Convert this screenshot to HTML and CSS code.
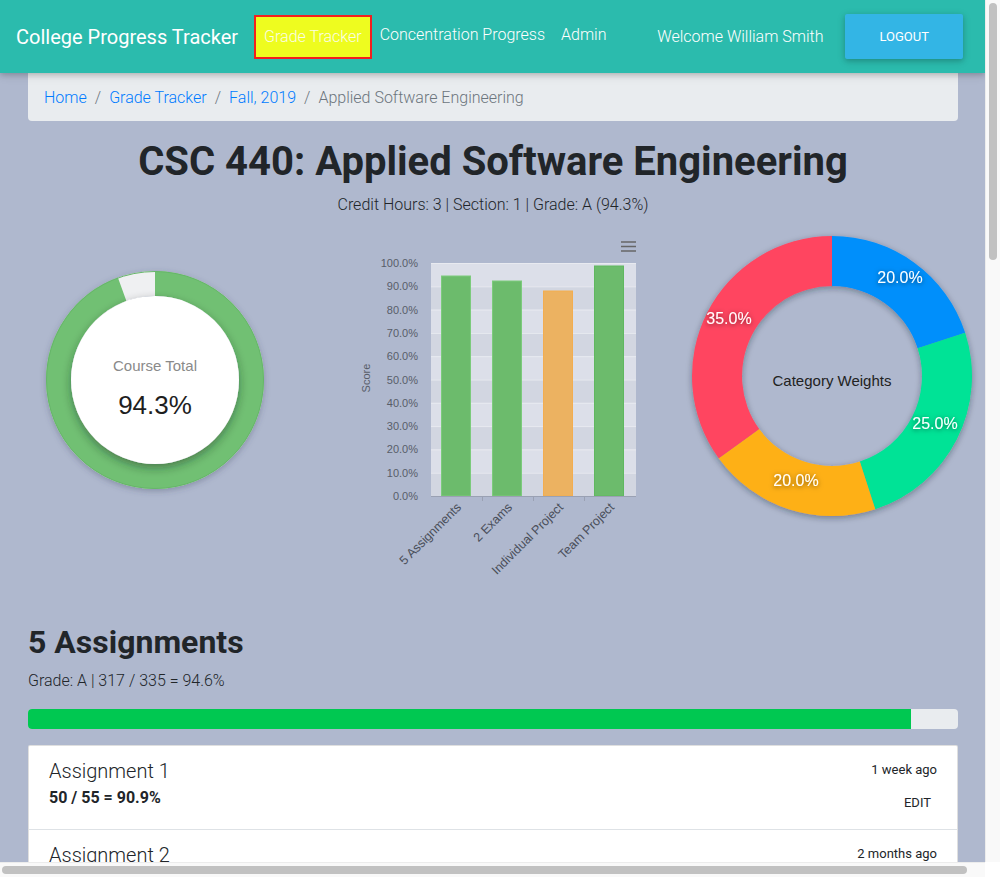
FILE: index.html
```html
<!DOCTYPE html>
<html lang="en">
<head>
<meta charset="utf-8">
<title>CSC 440: Applied Software Engineering</title>
<link rel="stylesheet" href="styles.css">
</head>
<body>
<nav class="navbar">
  <a class="brand" href="#">College Progress Tracker</a>
  <ul class="nav-links">
    <li class="nav-item active"><a href="#">Grade Tracker</a></li>
    <li class="nav-item"><a href="#">Concentration Progress</a></li>
    <li class="nav-item"><a href="#">Admin</a></li>
  </ul>
  <span class="welcome">Welcome William Smith</span>
  <button class="btn-logout">Logout</button>
</nav>

<main class="container">
  <ol class="breadcrumb">
    <li><a href="#">Home</a></li>
    <li><a href="#">Grade Tracker</a></li>
    <li><a href="#">Fall, 2019</a></li>
    <li class="current">Applied Software Engineering</li>
  </ol>

  <h1 class="course-title">CSC 440: Applied Software Engineering</h1>
  <p class="course-meta">Credit Hours: 3 | Section: 1 | Grade: A (94.3%)</p>

  <div class="charts">
    <div class="chart chart-total">
      <svg width="310" height="370" viewBox="0 0 310 370">
        <defs>
          <filter id="ringShadow" x="-30%" y="-30%" width="160%" height="160%">
            <feDropShadow dx="0" dy="2" stdDeviation="3" flood-color="#3a4560" flood-opacity="0.35"/>
          </filter>
          <filter id="innerShadow" x="-30%" y="-30%" width="160%" height="160%">
            <feDropShadow dx="0" dy="4" stdDeviation="5" flood-color="#1d2a22" flood-opacity="0.45"/>
          </filter>
        </defs>
        <g filter="url(#ringShadow)">
          <circle cx="127" cy="155" r="96.5" fill="none" stroke="#eff0f2" stroke-width="25"/>
          <circle cx="127" cy="155" r="96.5" fill="none" stroke="#71c073" stroke-width="25" stroke-dasharray="571.8 700" transform="rotate(-90 127 155)"/>
        </g>
        <circle cx="127" cy="155" r="108.5" fill="none" stroke="#66b669" stroke-width="1"/>
        <circle cx="127" cy="155" r="84" fill="#ffffff" filter="url(#innerShadow)"/>
        <text class="donut-label" x="127" y="146" text-anchor="middle">Course Total</text>
        <text class="donut-value" x="127" y="189" text-anchor="middle">94.3%</text>
      </svg>
    </div>

    <div class="chart chart-bars">
      <svg width="310" height="370" viewBox="0 0 310 370">
        <g class="menu-icon" stroke="#666" stroke-width="1.5">
          <line x1="283" y1="17" x2="298" y2="17"/>
          <line x1="283" y1="21.5" x2="298" y2="21.5"/>
          <line x1="283" y1="26" x2="298" y2="26"/>
        </g>
        <rect x="93" y="38" width="205" height="233" fill="#d2d6e1"/>
        <rect x="93" y="38" width="205" height="23.3" fill="#dcdfe9"/>
        <rect x="93" y="84.6" width="205" height="23.3" fill="#dcdfe9"/>
        <rect x="93" y="131.2" width="205" height="23.3" fill="#dcdfe9"/>
        <rect x="93" y="177.8" width="205" height="23.3" fill="#dcdfe9"/>
        <rect x="93" y="224.4" width="205" height="23.3" fill="#dcdfe9"/>
        <g stroke="#e8eaf0" stroke-width="1">
          <line x1="93" y1="38.5" x2="298" y2="38.5"/>
          <line x1="93" y1="61.8" x2="298" y2="61.8"/>
          <line x1="93" y1="85.1" x2="298" y2="85.1"/>
          <line x1="93" y1="108.4" x2="298" y2="108.4"/>
          <line x1="93" y1="131.7" x2="298" y2="131.7"/>
          <line x1="93" y1="155" x2="298" y2="155"/>
          <line x1="93" y1="178.3" x2="298" y2="178.3"/>
          <line x1="93" y1="201.6" x2="298" y2="201.6"/>
          <line x1="93" y1="224.9" x2="298" y2="224.9"/>
          <line x1="93" y1="248.2" x2="298" y2="248.2"/>
        </g>
        <g class="axis-labels" text-anchor="end">
          <text x="80" y="42">100.0%</text>
          <text x="80" y="65.3">90.0%</text>
          <text x="80" y="88.6">80.0%</text>
          <text x="80" y="111.9">70.0%</text>
          <text x="80" y="135.2">60.0%</text>
          <text x="80" y="158.5">50.0%</text>
          <text x="80" y="181.8">40.0%</text>
          <text x="80" y="205.1">30.0%</text>
          <text x="80" y="228.4">20.0%</text>
          <text x="80" y="251.7">10.0%</text>
          <text x="80" y="275">0.0%</text>
        </g>
        <text class="axis-title" transform="translate(32 153) rotate(-90)" text-anchor="middle">Score</text>
        <rect x="103.5" y="51" width="29" height="220" fill="#6cbb6c" stroke="#7ccb7c" stroke-width="1"/>
        <rect x="154.5" y="56" width="29" height="215" fill="#6cbb6c" stroke="#7ccb7c" stroke-width="1"/>
        <rect x="205.5" y="66" width="29" height="205" fill="#ecb261" stroke="#f3ad4f" stroke-width="1"/>
        <rect x="256.5" y="41" width="29" height="230" fill="#6cbb6c" stroke="#5fb85f" stroke-width="1"/>
        <line x1="93" y1="271.5" x2="298" y2="271.5" stroke="#9aa1b3" stroke-width="1"/>
        <g stroke="#9aa1b3" stroke-width="1">
          <line x1="144.5" y1="271" x2="144.5" y2="276"/>
          <line x1="195.5" y1="271" x2="195.5" y2="276"/>
          <line x1="246.5" y1="271" x2="246.5" y2="276"/>
        </g>
        <g class="cat-labels" text-anchor="end">
          <text transform="translate(124 283) rotate(-45)">5 Assignments</text>
          <text transform="translate(175 283) rotate(-45)">2 Exams</text>
          <text transform="translate(226 283) rotate(-45)">Individual Project</text>
          <text transform="translate(277 283) rotate(-45)">Team Project</text>
        </g>
      </svg>
    </div>

    <div class="chart chart-weights">
      <svg width="355" height="370" viewBox="0 0 355 370">
        <defs>
          <filter id="pieShadow" x="-20%" y="-20%" width="140%" height="140%">
            <feDropShadow dx="0" dy="2" stdDeviation="3" flood-color="#1c2233" flood-opacity="0.4"/>
          </filter>
          <filter id="labelShadow" x="-30%" y="-60%" width="160%" height="220%">
            <feDropShadow dx="0" dy="1" stdDeviation="2.5" flood-color="#000" flood-opacity="0.55"/>
          </filter>
        </defs>
        <g filter="url(#pieShadow)">
          <path fill="#008ffb" d="M184 11 A140 140 0 0 1 317.15 107.74 L269.6 123.19 A90 90 0 0 0 184 61 Z"/>
          <path fill="#00e396" d="M317.15 107.74 A140 140 0 0 1 227.26 284.15 L211.81 236.6 A90 90 0 0 0 269.6 123.19 Z"/>
          <path fill="#feb019" d="M227.26 284.15 A140 140 0 0 1 70.74 233.29 L111.19 203.9 A90 90 0 0 0 211.81 236.6 Z"/>
          <path fill="#ff4560" d="M70.74 233.29 A140 140 0 0 1 184 11 L184 61 A90 90 0 0 0 111.19 203.9 Z"/>
        </g>
        <g class="pie-labels" text-anchor="middle" filter="url(#labelShadow)">
          <text x="252" y="58">20.0%</text>
          <text x="287" y="204">25.0%</text>
          <text x="148" y="261">20.0%</text>
          <text x="81" y="99">35.0%</text>
        </g>
        <text class="pie-center" x="184" y="161" text-anchor="middle">Category Weights</text>
      </svg>
    </div>
  </div>

  <section class="category">
    <h2 class="category-title">5 Assignments</h2>
    <p class="grade-line">Grade: A | 317 / 335 = 94.6%</p>
    <div class="progress"><div class="progress-bar" style="width: 94.9%"></div></div>
    <ul class="item-list">
      <li class="item">
        <div class="item-main"><h3 class="item-name">Assignment 1</h3><strong class="item-score">50 / 55 = 90.9%</strong></div>
        <div class="item-side"><small class="item-date">1 week ago</small><button class="btn-edit">Edit</button></div>
      </li>
      <li class="item">
        <div class="item-main"><h3 class="item-name">Assignment 2</h3><strong class="item-score">68 / 70 = 97.1%</strong></div>
        <div class="item-side"><small class="item-date">2 months ago</small><button class="btn-edit">Edit</button></div>
      </li>
      <li class="item">
        <div class="item-main"><h3 class="item-name">Assignment 3</h3><strong class="item-score">65 / 70 = 92.9%</strong></div>
        <div class="item-side"><small class="item-date">2 months ago</small><button class="btn-edit">Edit</button></div>
      </li>
      <li class="item">
        <div class="item-main"><h3 class="item-name">Assignment 4</h3><strong class="item-score">67 / 70 = 95.7%</strong></div>
        <div class="item-side"><small class="item-date">3 months ago</small><button class="btn-edit">Edit</button></div>
      </li>
      <li class="item">
        <div class="item-main"><h3 class="item-name">Assignment 5</h3><strong class="item-score">67 / 70 = 95.7%</strong></div>
        <div class="item-side"><small class="item-date">3 months ago</small><button class="btn-edit">Edit</button></div>
      </li>
    </ul>
  </section>

  <section class="category">
    <h2 class="category-title">2 Exams</h2>
    <p class="grade-line">Grade: A- | 185 / 200 = 92.5%</p>
    <div class="progress"><div class="progress-bar" style="width: 92.5%"></div></div>
    <ul class="item-list">
      <li class="item">
        <div class="item-main"><h3 class="item-name">Midterm Exam</h3><strong class="item-score">90 / 100 = 90.0%</strong></div>
        <div class="item-side"><small class="item-date">1 month ago</small><button class="btn-edit">Edit</button></div>
      </li>
      <li class="item">
        <div class="item-main"><h3 class="item-name">Final Exam</h3><strong class="item-score">95 / 100 = 95.0%</strong></div>
        <div class="item-side"><small class="item-date">1 week ago</small><button class="btn-edit">Edit</button></div>
      </li>
    </ul>
  </section>

  <section class="category">
    <h2 class="category-title">Individual Project</h2>
    <p class="grade-line">Grade: B+ | 88 / 100 = 88.0%</p>
    <div class="progress"><div class="progress-bar warn" style="width: 88%"></div></div>
    <ul class="item-list">
      <li class="item">
        <div class="item-main"><h3 class="item-name">Individual Project</h3><strong class="item-score">88 / 100 = 88.0%</strong></div>
        <div class="item-side"><small class="item-date">1 month ago</small><button class="btn-edit">Edit</button></div>
      </li>
    </ul>
  </section>

  <section class="category">
    <h2 class="category-title">Team Project</h2>
    <p class="grade-line">Grade: A | 99 / 100 = 99.0%</p>
    <div class="progress"><div class="progress-bar" style="width: 99%"></div></div>
    <ul class="item-list">
      <li class="item">
        <div class="item-main"><h3 class="item-name">Team Project</h3><strong class="item-score">99 / 100 = 99.0%</strong></div>
        <div class="item-side"><small class="item-date">1 week ago</small><button class="btn-edit">Edit</button></div>
      </li>
    </ul>
  </section>
</main>
<footer class="page-footer">College Progress Tracker</footer>

<div class="scrollbar scrollbar-v" aria-hidden="true"><div class="scroll-thumb"></div></div>
<div class="scrollbar scrollbar-h" aria-hidden="true"><div class="scroll-thumb"></div></div>
<div class="scroll-corner" aria-hidden="true"></div>
</body>
</html>
```

FILE: styles.css
```css
html, body {
  margin: 0;
  padding: 0;
}

html {
  overflow: hidden;
}

body {
  margin-right: 15px;
  background: #afb8ce;
  font-family: Roboto, "Noto Sans", sans-serif;
  font-weight: 300;
  font-size: 16px;
  line-height: 1.5;
  color: #212529;
}

a {
  text-decoration: none;
}

/* Window scrollbars (overlay) */
.scrollbar {
  position: fixed;
  z-index: 10;
  background: #f9f9f9;
  box-sizing: border-box;
}

.scrollbar-v {
  top: 0;
  right: 0;
  width: 15px;
  height: 862px;
  border-left: 1px solid #ececec;
}

.scrollbar-h {
  left: 0;
  bottom: 0;
  width: 985px;
  height: 15px;
  border-top: 1px solid #ececec;
}

.scroll-thumb {
  position: absolute;
  background: #c1c1c1;
  border-radius: 4px;
}

.scrollbar-v .scroll-thumb {
  top: 3px;
  left: 3px;
  width: 8px;
  height: 257px;
}

.scrollbar-h .scroll-thumb {
  left: 2px;
  top: 3px;
  width: 965px;
  height: 8px;
}

.scroll-corner {
  position: fixed;
  z-index: 10;
  right: 0;
  bottom: 0;
  width: 15px;
  height: 15px;
  background: #ffffff;
}

/* Navbar */
.navbar {
  position: relative;
  z-index: 2;
  display: flex;
  align-items: center;
  height: 73px;
  padding: 0 22px 0 16px;
  background: #2bbbad;
  box-shadow: 0 2px 5px 0 rgba(0, 0, 0, 0.16), 0 2px 10px 0 rgba(0, 0, 0, 0.12);
  box-sizing: border-box;
}

.brand {
  color: #fff;
  font-size: 20px;
  font-weight: 400;
  margin-right: 16px;
  white-space: nowrap;
}

.nav-links {
  display: flex;
  align-items: center;
  list-style: none;
  margin: 0;
  padding: 0;
}

.nav-item a {
  display: block;
  padding: 8px;
  color: #fff;
  white-space: nowrap;
  margin-top: -4px;
}

.nav-item.active a {
  background: #eefc1f;
  border: 2px solid #f21f1f;
  padding: 8px;
  margin: 0;
  color: #fbfde4;
}

.welcome {
  margin-left: auto;
  margin-right: 22px;
  color: #fff;
  white-space: nowrap;
}

.btn-logout {
  font-family: Roboto, sans-serif;
  font-weight: 400;
  font-size: 13px;
  line-height: 19.5px;
  text-transform: uppercase;
  color: #fff;
  background: #33b5e5;
  border: 0;
  border-radius: 2px;
  padding: 13px 34px;
  box-shadow: 0 2px 5px 0 rgba(0, 0, 0, 0.16), 0 2px 10px 0 rgba(0, 0, 0, 0.12);
}

/* Container */
.container {
  width: 930px;
  margin: 0 0 0 28px;
}

.breadcrumb {
  display: flex;
  list-style: none;
  margin: 0 0 17px;
  padding: 13px 16px 11px;
  background: #e9ecef;
  border-radius: 0 0 4px 4px;
}

.breadcrumb li + li::before {
  content: "/";
  color: #6c757d;
  padding: 0 8px;
}

.breadcrumb a {
  color: #007bff;
}

.breadcrumb .current {
  color: #6c757d;
}

.course-title {
  margin: 0 0 7px;
  text-align: center;
  font-size: 40px;
  font-weight: 700;
  line-height: 1.2;
}

.course-meta {
  margin: 0;
  text-align: center;
}

/* Charts */
.charts {
  display: flex;
  margin-top: 8px;
  width: 975px;
}

.chart svg {
  display: block;
}

.donut-label {
  font-family: "Liberation Sans", Arial, sans-serif;
  font-size: 15px;
  fill: #8a8a8a;
}

.donut-value {
  font-family: "Liberation Sans", Arial, sans-serif;
  font-size: 26px;
  fill: #1e1e1e;
}

.axis-labels text,
.axis-title {
  font-family: "Liberation Sans", Arial, sans-serif;
  font-size: 11px;
  fill: #585d69;
}

.cat-labels text {
  font-family: "Liberation Sans", Arial, sans-serif;
  font-size: 12.5px;
  fill: #4a4f5a;
}

.pie-labels text {
  font-family: "Liberation Sans", Arial, sans-serif;
  font-size: 16px;
  fill: #fff;
}

.pie-center {
  font-family: "Liberation Sans", Arial, sans-serif;
  font-size: 15px;
  fill: #222;
}

/* Categories */
.category {
  margin-top: 28px;
}

.category + .category {
  margin-top: 48px;
}

.category-title {
  margin: 0 0 8px;
  font-size: 32px;
  font-weight: 700;
  line-height: 1.2;
}

.grade-line {
  margin: 0 0 16px;
  font-size: 16px;
}

.progress {
  height: 20px;
  background: #e9ecef;
  border-radius: 4px;
  overflow: hidden;
  margin-bottom: 16px;
}

.progress-bar {
  height: 100%;
  background: #00c851;
}

.progress-bar.warn {
  background: #ffbb33;
}

.item-list {
  list-style: none;
  margin: 0;
  padding: 0;
  background: #fff;
  border: 1px solid rgba(0, 0, 0, 0.125);
  border-radius: 2px;
}

.item {
  display: flex;
  justify-content: space-between;
  height: 84px;
  box-sizing: border-box;
  padding: 13px 20px 0;
  border-top: 1px solid #dee2e6;
}

.item:first-child {
  border-top: 0;
  height: 83px;
}

.item-name {
  margin: 0;
  font-size: 20px;
  font-weight: 300;
  line-height: 1.2;
}

.item-score {
  display: block;
  font-weight: 700;
  margin-top: 3px;
}

.item-side {
  display: flex;
  flex-direction: column;
  align-items: flex-end;
}

.item-date {
  margin-top: 1px;
  font-size: 13px;
  font-weight: 400;
  line-height: 1.5;
}

.btn-edit {
  margin-top: 10px;
  padding: 3px 6px;
  line-height: 19px;
  background: transparent;
  border: 0;
  font-family: Roboto, sans-serif;
  font-size: 13px;
  font-weight: 400;
  text-transform: uppercase;
  color: #212529;
}

.page-footer {
  margin-top: 48px;
  padding: 20px 28px;
  color: #fff;
  background: #2bbbad;
}
```
